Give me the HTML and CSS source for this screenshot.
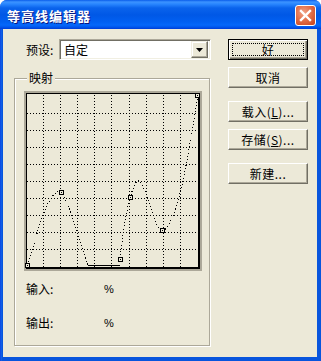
FILE: index.html
```html
<!DOCTYPE html>
<html>
<head>
<meta charset="utf-8">
<link rel="stylesheet" href="styles.css">
</head>
<body>
<div class="window">
  <div class="titlebar">
    <span class="title">等高线编辑器</span>
    <div class="close">
      <svg width="13" height="13" viewBox="0 0 13 13"><path d="M2 2 L11 11 M11 2 L2 11" stroke="#fff" stroke-width="2.4" stroke-linecap="square"/></svg>
    </div>
  </div>
  <div class="client">
    <div class="left">
      <div class="preset-row">
        <span class="label">预设:</span>
        <div class="select">
          <span class="select-text">自定</span>
          <span class="drop"><svg width="7" height="4" viewBox="0 0 7 4"><path d="M0 0 H7 L3.5 4 Z" fill="#000"/></svg></span>
        </div>
      </div>
      <div class="group">
        <span class="legend">映射</span>
        <svg class="graph" width="178" height="180" viewBox="0 0 178 180" shape-rendering="crispEdges">
          <g transform="translate(-24 -91)">
            <rect x="24" y="91" width="178" height="180" fill="#ACA899"/>
            <rect x="26" y="93" width="174" height="176" fill="#000"/>
            <rect x="27" y="94" width="171" height="173" fill="#ECE9D8"/>
            <g stroke="#000" stroke-width="1" stroke-dasharray="1 2">
              <path d="M43.5 95V267 M60.5 95V267 M77.5 95V267 M94.5 95V267 M111.5 95V267 M129.5 95V267 M146.5 95V267 M163.5 95V267 M180.5 95V267"/>
              <path d="M27 113.5H198 M27 130.5H198 M27 147.5H198 M27 164.5H198 M27 181.5H198 M27 198.5H198 M27 215.5H198 M27 232.5H198 M27 249.5H198"/>
            </g>
            <g fill="none" stroke="#000" stroke-width="1">
              <path stroke-dasharray="1 2.2" d="M27.5 265 C38 232 46 196 58 191.5 C66 189 78 236 88 265.5"/>
              <path d="M88 265.5 H120"/>
              <path stroke-dasharray="1 2.2" d="M120.5 255 C123 235 126 210 131 195 C134 184 137 180 139 181 C144 182 150 210 157 225 C159 229 161 231 163 231 C170 228 178 205 183 180 C188 158 193 125 197.5 97"/>
            </g>
            <g fill="#ECE9D8" stroke="#000" stroke-width="1">
              <rect x="25.5" y="263.5" width="4" height="4"/>
              <rect x="59.5" y="190.5" width="4" height="4"/>
              <rect x="118.5" y="257.5" width="4" height="4"/>
              <rect x="128.5" y="195.5" width="4" height="4"/>
              <rect x="160.5" y="228.5" width="4" height="4"/>
              <rect x="195.5" y="93.5" width="4" height="4"/>
            </g>
            <g fill="#000">
              <rect x="27" y="265" width="1" height="1"/>
              <rect x="61" y="192" width="1" height="1"/>
              <rect x="120" y="259" width="1" height="1"/>
              <rect x="130" y="197" width="1" height="1"/>
              <rect x="162" y="230" width="1" height="1"/>
              <rect x="197" y="95" width="1" height="1"/>
            </g>
          </g>
        </svg>
        <div class="readout"><span class="r-label">输入:</span><span class="pct">%</span></div>
        <div class="readout"><span class="r-label">输出:</span><span class="pct">%</span></div>
      </div>
    </div>
    <div class="buttons">
      <div class="btn default"><span class="focus">好</span></div>
      <div class="btn b-cancel">取消</div>
      <div class="btn b-load">载入(<u>L</u>)...</div>
      <div class="btn b-save">存储(<u>S</u>)...</div>
      <div class="btn b-new">新建...</div>
    </div>
  </div>
</div>
</body>
</html>
```

FILE: styles.css
```css
html, body {
  margin: 0;
  padding: 0;
  background: #ffffff;
}
.window {
  width: 321px;
  height: 361px;
  display: flex;
  flex-direction: column;
  background: linear-gradient(to right, #0831D9 0px, #166AEE 1px, #0855DD 2px, #0855DD 100%);
  border-radius: 7px 7px 0 0;
  overflow: hidden;
  font-family: "Noto Sans CJK SC", "Liberation Sans", sans-serif;
  font-size: 12px;
  color: #000;
}
.titlebar {
  height: 29px;
  flex: none;
  display: flex;
  align-items: center;
  justify-content: space-between;
  padding: 0 5px 0 7px;
  background: linear-gradient(to bottom, #0A5DEA 0px, #3C93FF 2px, #2A87FF 4px, #0A63EC 8px, #0058E6 15px, #0160F2 22px, #0568FA 25px, #0058EE 27px, #003DD7 29px);
}
.title {
  color: #fff;
  font-weight: bold;
  font-size: 13px;
  letter-spacing: 1px;
  text-shadow: 1px 1px 0 #0A1883;
  margin-top: 1px;
}
.close {
  width: 19px;
  height: 19px;
  border: 1px solid #fff;
  border-radius: 3px;
  background: radial-gradient(circle at 40% 35%, #F0A48A 0%, #E3704B 45%, #C8401A 100%);
  display: flex;
  align-items: center;
  justify-content: center;
  margin-top: 2px;
}
.close svg { display: block; }
.client {
  flex: 1;
  margin: 0 4px 4px 3px;
  background: #ECE9D8;
  display: flex;
}
.left {
  width: 208px;
  flex: none;
}
.preset-row {
  margin-top: 10px;
  height: 21px;
  padding-left: 23px;
  display: flex;
  align-items: center;
}
.label {
  flex: 1;
}
.select {
  width: 152px;
  height: 21px;
  box-sizing: border-box;
  border: 1px solid;
  border-color: #ACA899 #FFFFFF #FFFFFF #ACA899;
  box-shadow: inset 1px 1px 0 #716F64, inset -1px -1px 0 #F1EFE2;
  background: #fff;
  display: flex;
  align-items: center;
  padding: 2px;
}
.select-text {
  flex: 1;
  padding-left: 2px;
  line-height: 17px;
}
.drop {
  width: 17px;
  height: 17px;
  box-sizing: border-box;
  background: #ECE9D8;
  border: 1px solid;
  border-color: #F1EFE2 #716F64 #716F64 #F1EFE2;
  box-shadow: inset -1px -1px 0 #ACA899, inset 1px 1px 0 #fff;
  display: flex;
  align-items: center;
  justify-content: center;
}
.drop svg { display: block; }
.group {
  position: relative;
  margin: 18px 0 0 11px;
  width: 196px;
  height: 268px;
  box-sizing: border-box;
  border: 1px solid #ACA899;
  box-shadow: inset 1px 1px 0 #fff, 1px 1px 0 #fff;
  padding: 12px 0 0 9px;
}
.legend {
  position: absolute;
  left: 12px;
  top: -9px;
  padding: 0 2px;
  background: #ECE9D8;
  line-height: 16px;
}
.graph {
  display: block;
}
.readout {
  display: flex;
  padding-left: 2px;
  height: 16px;
  line-height: 16px;
  margin-top: 10px;
}
.readout + .readout {
  margin-top: 18px;
}
.r-label {
  width: 78px;
}
.pct {
  font-family: "Liberation Sans", sans-serif;
  font-size: 11px;
}
.buttons {
  margin-left: 17px;
  margin-top: 10px;
  width: 80px;
  display: flex;
  flex-direction: column;
}
.btn {
  height: 21px;
  box-sizing: border-box;
  background: #ECE9D8;
  border: 1px solid;
  border-color: #fff #716F64 #716F64 #fff;
  box-shadow: inset -1px -1px 0 #ACA899;
  display: flex;
  align-items: center;
  justify-content: center;
  line-height: 16px;
  letter-spacing: 0.5px;
}
.btn.default {
  border: 1px solid #000;
  box-shadow: inset 1px 1px 0 #fff, inset -1px -1px 0 #716F64, inset -2px -2px 0 #ACA899;
  padding: 3px;
}
.focus {
  flex: 1;
  align-self: stretch;
  border: 1px dotted #000;
  display: flex;
  align-items: center;
  justify-content: center;
}
.b-cancel { margin-top: 7px; }
.b-load { margin-top: 13px; }
.b-save { margin-top: 7px; }
.b-new { margin-top: 13px; }
```
